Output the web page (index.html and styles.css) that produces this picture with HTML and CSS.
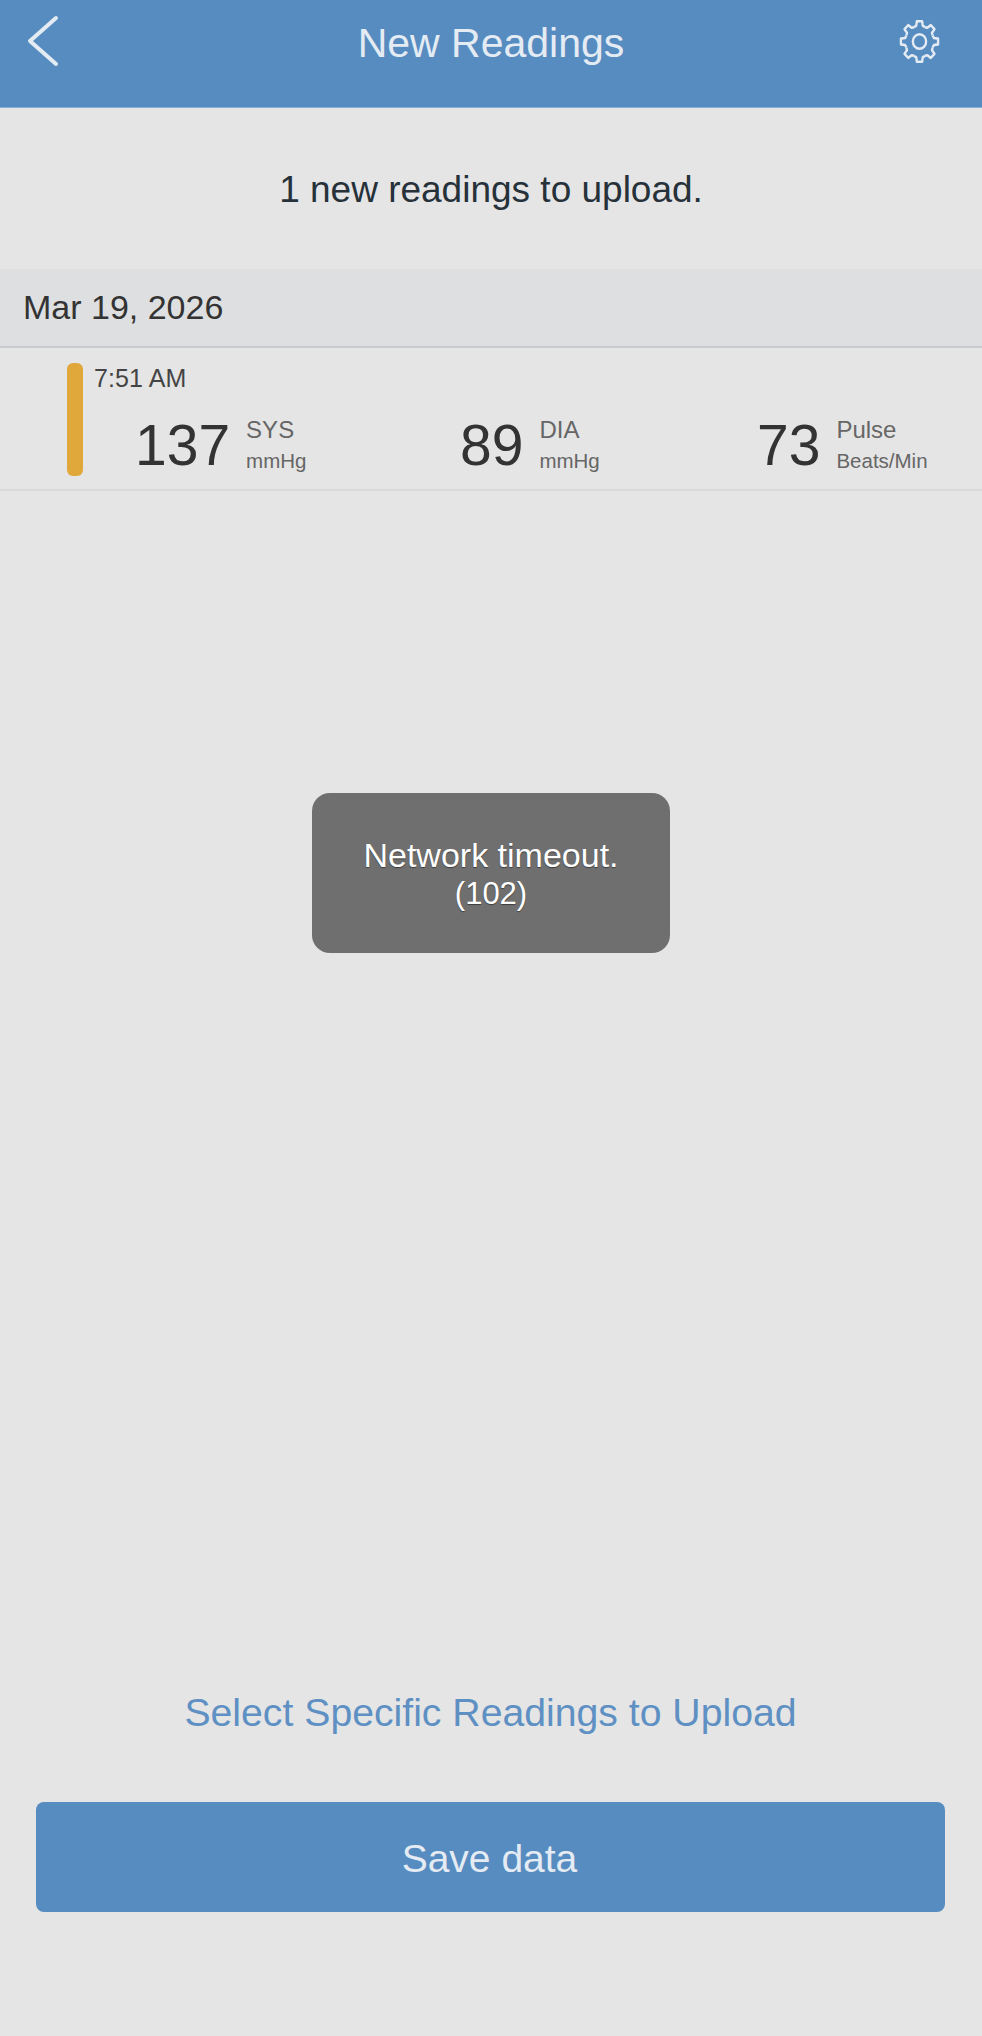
FILE: index.html
```html
<!DOCTYPE html>
<html lang="en">
<head>
<meta charset="utf-8">
<title>New Readings</title>
<link rel="stylesheet" href="styles.css">
</head>
<body>
<div class="screen">
  <header class="topbar">
    <svg class="back" viewBox="0 0 34 52" aria-hidden="true"><path d="M30 3 L4 26 L30 49"/></svg>
    <h1 class="title">New Readings</h1>
    <svg class="gear" viewBox="-22 -22 44 44" preserveAspectRatio="none" aria-hidden="true">
      <defs><path id="tooth" d="M-5.55 -13.4 L-3.3 -14.8 L-2.7 -19 L2.7 -19 L3.3 -14.8 L5.55 -13.4"/></defs>
      <use href="#tooth"/>
      <use href="#tooth" transform="rotate(45)"/>
      <use href="#tooth" transform="rotate(90)"/>
      <use href="#tooth" transform="rotate(135)"/>
      <use href="#tooth" transform="rotate(180)"/>
      <use href="#tooth" transform="rotate(225)"/>
      <use href="#tooth" transform="rotate(270)"/>
      <use href="#tooth" transform="rotate(315)"/>
      <circle r="6.8"/>
    </svg>
  </header>
  <p class="summary">1 new readings to upload.</p>
  <div class="date-band">Mar 19, 2026</div>
  <div class="reading">
    <div class="status-bar"></div>
    <div class="reading-body">
      <div class="time">7:51 AM</div>
      <div class="metrics">
        <div class="metric">
          <span class="value">137</span>
          <div class="labels"><span class="name">SYS</span><span class="unit">mmHg</span></div>
        </div>
        <div class="metric">
          <span class="value">89</span>
          <div class="labels"><span class="name">DIA</span><span class="unit">mmHg</span></div>
        </div>
        <div class="metric">
          <span class="value">73</span>
          <div class="labels"><span class="name">Pulse</span><span class="unit">Beats/Min</span></div>
        </div>
      </div>
    </div>
  </div>
  <div class="actions">
    <a class="select-link">Select Specific Readings to Upload</a>
    <button class="save">Save data</button>
  </div>
  <div class="toast">Network timeout.<br><span class="code">(102)</span></div>
</div>
</body>
</html>
```
FILE: styles.css
```css
* { box-sizing: border-box; }
html, body { margin: 0; padding: 0; }
body {
  background: #e5e5e5;
  font-family: "Liberation Sans", Arial, sans-serif;
}
.screen {
  position: relative;
  width: 982px;
  height: 2036px;
  display: flex;
  flex-direction: column;
  background: #e5e5e5;
  overflow: hidden;
}
.topbar {
  height: 108px;
  flex: none;
  background: #578cc1;
  border-bottom: 1px solid #86afd8;
  display: grid;
  grid-template-columns: 1fr auto 1fr;
  align-items: start;
  padding: 16px 41px 0 41px;
}
.back {
  width: 34px;
  height: 52px;
  margin: -1px 0 0 -15px;
  fill: none;
  stroke: #e4ebf3;
  stroke-width: 4;
  stroke-linecap: round;
  stroke-linejoin: round;
}
.title {
  margin: 0;
  font-size: 41px;
  line-height: 54px;
  font-weight: 400;
  color: #e4ebf3;
}
.gear {
  justify-self: end;
  width: 43px;
  height: 47px;
  margin-top: 2px;
  fill: none;
  stroke: #e4ebf3;
  stroke-width: 2.4;
  stroke-linejoin: round;
}
.summary {
  margin: 0;
  height: 161px;
  flex: none;
  padding-top: 61px;
  text-align: center;
  font-size: 37px;
  line-height: 42px;
  color: #26313a;
}
.date-band {
  height: 79px;
  flex: none;
  background: #dedfe1;
  border-bottom: 2px solid #c9cbce;
  padding-left: 23px;
  font-size: 34px;
  line-height: 77px;
  color: #333;
}
.reading {
  height: 143px;
  flex: none;
  border-bottom: 2px solid #d9d9d9;
  display: flex;
  padding: 15px 0 0 67px;
}
.status-bar {
  width: 16px;
  height: 113px;
  flex: none;
  border-radius: 6px;
  background: #e0a83a;
}
.reading-body { margin-left: 11px; flex: 1; }
.time {
  font-size: 25px;
  line-height: 30px;
  letter-spacing: 0.1px;
  color: #444;
}
.metrics {
  display: grid;
  grid-template-columns: 325px 297px auto;
  margin: 19px 0 0 41px;
}
.metric { display: flex; align-items: center; }
.value {
  font-size: 57px;
  line-height: 66px;
  color: #333;
  margin-right: 16px;
}
.labels { display: flex; flex-direction: column; color: #666; }
.name { font-size: 24px; line-height: 30px; margin-top: -2px; }
.unit { font-size: 20.5px; line-height: 26px; margin-top: 3px; }
.actions {
  margin-top: auto;
  padding: 0 37px 124px 36px;
  display: flex;
  flex-direction: column;
  align-items: stretch;
  gap: 67px;
}
.select-link {
  text-align: center;
  font-size: 39.2px;
  line-height: 44px;
  color: #5e90c3;
}
.save {
  height: 110px;
  border: 0;
  border-radius: 8px;
  padding: 3px 2px 0 0;
  background: #578cc1;
  color: #e4ebf3;
  font-family: inherit;
  font-size: 39px;
}
.toast {
  position: absolute;
  left: 312px;
  top: 793px;
  width: 358px;
  height: 160px;
  border-radius: 18px;
  background: #6f6f6f;
  color: #fff;
  text-align: center;
  font-size: 34px;
  line-height: 38px;
  padding-top: 43px;
  text-shadow: 0 1px 1px rgba(0,0,0,.45);
}
.code { font-size: 31px; position: relative; top: -1px; }
```
